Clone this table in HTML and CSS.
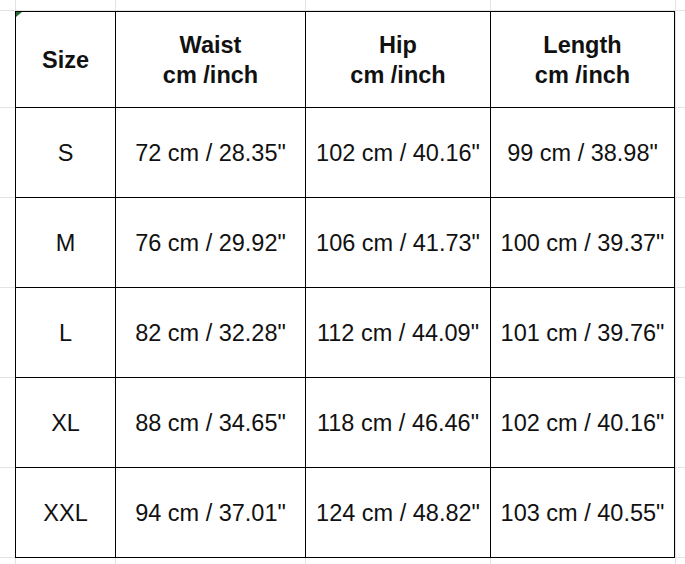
FILE: index.html
```html
<!DOCTYPE html>
<html>
<head>
<meta charset="utf-8">
<link rel="stylesheet" href="styles.css">
</head>
<body>
<div class="sheet">
  <div class="chart">
    <div class="cell head first"><span class="flag"></span>Size</div>
    <div class="cell head">Waist<br>cm /inch</div>
    <div class="cell head">Hip<br>cm /inch</div>
    <div class="cell head">Length<br>cm /inch</div>

    <div class="cell">S</div>
    <div class="cell">72 cm / 28.35"</div>
    <div class="cell">102 cm / 40.16"</div>
    <div class="cell">99 cm / 38.98"</div>

    <div class="cell">M</div>
    <div class="cell">76 cm / 29.92"</div>
    <div class="cell">106 cm / 41.73"</div>
    <div class="cell">100 cm / 39.37"</div>

    <div class="cell">L</div>
    <div class="cell">82 cm / 32.28"</div>
    <div class="cell">112 cm / 44.09"</div>
    <div class="cell">101 cm / 39.76"</div>

    <div class="cell">XL</div>
    <div class="cell">88 cm / 34.65"</div>
    <div class="cell">118 cm / 46.46"</div>
    <div class="cell">102 cm / 40.16"</div>

    <div class="cell">XXL</div>
    <div class="cell">94 cm / 37.01"</div>
    <div class="cell">124 cm / 48.82"</div>
    <div class="cell">103 cm / 40.55"</div>
  </div>
</div>
</body>
</html>
```
FILE: styles.css
```css
html, body {
  margin: 0;
  padding: 0;
  background: #fff;
}
body {
  width: 685px;
  height: 564px;
  overflow: hidden;
  font-family: "Liberation Sans", Arial, sans-serif;
  color: #111;
  background-color: #fff;
  background-image:
    linear-gradient(to right, transparent 15px, #e3e3e3 15px, #e3e3e3 16px, transparent 16px),
    linear-gradient(to right, transparent 115px, #e3e3e3 115px, #e3e3e3 116px, transparent 116px),
    linear-gradient(to right, transparent 305px, #e3e3e3 305px, #e3e3e3 306px, transparent 306px),
    linear-gradient(to right, transparent 490px, #e3e3e3 490px, #e3e3e3 491px, transparent 491px),
    linear-gradient(to right, transparent 675px, #e3e3e3 675px, #e3e3e3 676px, transparent 676px),
    linear-gradient(to bottom, transparent 10px, #e3e3e3 10px, #e3e3e3 11px, transparent 11px),
    linear-gradient(to bottom, transparent 107px, #e3e3e3 107px, #e3e3e3 108px, transparent 108px),
    linear-gradient(to bottom, transparent 197px, #e3e3e3 197px, #e3e3e3 198px, transparent 198px),
    linear-gradient(to bottom, transparent 287px, #e3e3e3 287px, #e3e3e3 288px, transparent 288px),
    linear-gradient(to bottom, transparent 377px, #e3e3e3 377px, #e3e3e3 378px, transparent 378px),
    linear-gradient(to bottom, transparent 467px, #e3e3e3 467px, #e3e3e3 468px, transparent 468px),
    linear-gradient(to bottom, transparent 557px, #e3e3e3 557px, #e3e3e3 558px, transparent 558px);
}
.sheet {
  padding: 11px 0 0 15px;
}
.chart {
  display: grid;
  grid-template-columns: 99px 189px 184px 183px;
  grid-template-rows: 95px repeat(5, 89px);
  gap: 1px;
  padding: 1px;
  background: #000;
  width: max-content;
}
.cell {
  position: relative;
  background: #fff;
  display: flex;
  align-items: center;
  justify-content: center;
  text-align: center;
  font-size: 23.5px;
  line-height: 30px;
  white-space: nowrap;
}
.head {
  font-weight: bold;
}
.cell.first {
  padding-top: 0;
}
.flag {
  position: absolute;
  left: 0;
  top: 0;
  width: 0;
  height: 0;
  border-top: 5px solid #2a6a32;
  border-right: 6px solid transparent;
}
```
